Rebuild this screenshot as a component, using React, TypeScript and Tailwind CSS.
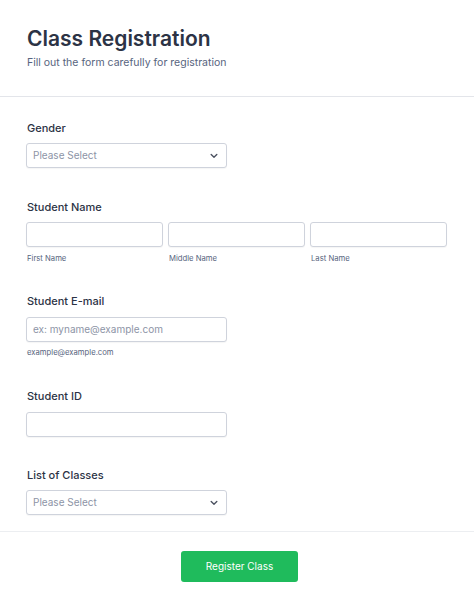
const FONT = "font-['Inter','Noto_Sans',sans-serif]";

function Label({ children }: { children: React.ReactNode }) {
  return <div className="text-[11px] leading-4 font-medium text-[#2c3345]">{children}</div>;
}

function Box({ className = "", children }: { className?: string; children?: React.ReactNode }) {
  return (
    <div
      className={`h-[25px] rounded-[3px] border border-[#cfd3dc] bg-white shadow-[0_1px_1px_rgba(0,0,0,0.04)] ${className}`}
    >
      {children}
    </div>
  );
}

function Select() {
  return (
    <Box className="w-[201px] flex items-center justify-between pl-[6px] pr-[8px]">
      <span className="text-[10px] text-[#8d94a6]">Please Select</span>
      <svg width="8" height="6" viewBox="0 0 8 6" fill="none">
        <path d="M1.2 1.6l2.8 2.6 2.8-2.6" stroke="#4b5160" strokeWidth="1.4" strokeLinecap="round" strokeLinejoin="round" />
      </svg>
    </Box>
  );
}

function Sub({ children }: { children: React.ReactNode }) {
  return <div className="text-[7.7px] leading-3 text-[#57647e]">{children}</div>;
}

export default function App() {
  return (
    <div className={`w-[474px] h-[606px] bg-white ${FONT}`}>
      {/* Header */}
      <div className="pl-[27px] pt-[25px] pb-[25px]">
        <h1 className="text-[21px] leading-7 font-semibold text-[#2c3345]">Class Registration</h1>
        <p className="mt-[2px] text-[10.5px] leading-4 text-[#57647e]">Fill out the form carefully for registration</p>
      </div>
      <div className="h-px bg-[#e3e5ea]" />

      {/* Form */}
      <div className="pl-[26px] pt-[23px]">
        <div className="pl-px">
          <Label>Gender</Label>
        </div>
        <div className="mt-[7px]">
          <Select />
        </div>

        <div className="mt-[31px] pl-px">
          <Label>Student Name</Label>
        </div>
        <div className="mt-[7px] flex gap-[5px]">
          {["First Name", "Middle Name", "Last Name"].map((n) => (
            <div key={n} className="flex flex-col">
              <Box className="w-[137px]" />
              <div className="mt-[6px] pl-[1px]">
                <Sub>{n}</Sub>
              </div>
            </div>
          ))}
        </div>

        <div className="mt-[28px] pl-px">
          <Label>Student E-mail</Label>
        </div>
        <div className="mt-[8px]">
          <Box className="w-[201px] flex items-center pl-[6px]">
            <span className="text-[10px] text-[#8d94a6]">ex: myname@example.com</span>
          </Box>
        </div>
        <div className="mt-[5px] pl-[1px]">
          <Sub>example@example.com</Sub>
        </div>

        <div className="mt-[29px] pl-px">
          <Label>Student ID</Label>
        </div>
        <div className="mt-[8px]">
          <Box className="w-[201px]" />
        </div>

        <div className="mt-[30px] pl-px">
          <Label>List of Classes</Label>
        </div>
        <div className="mt-[7px]">
          <Select />
        </div>
      </div>

      <div className="mt-[16px] h-px bg-[#eceef1]" />

      <div className="flex justify-center pt-[19px] pl-[5px]">
        <button className="w-[117px] h-[31px] rounded-[3px] bg-[#1fbb5c] text-white text-[10px]">
          Register Class
        </button>
      </div>
    </div>
  );
}
